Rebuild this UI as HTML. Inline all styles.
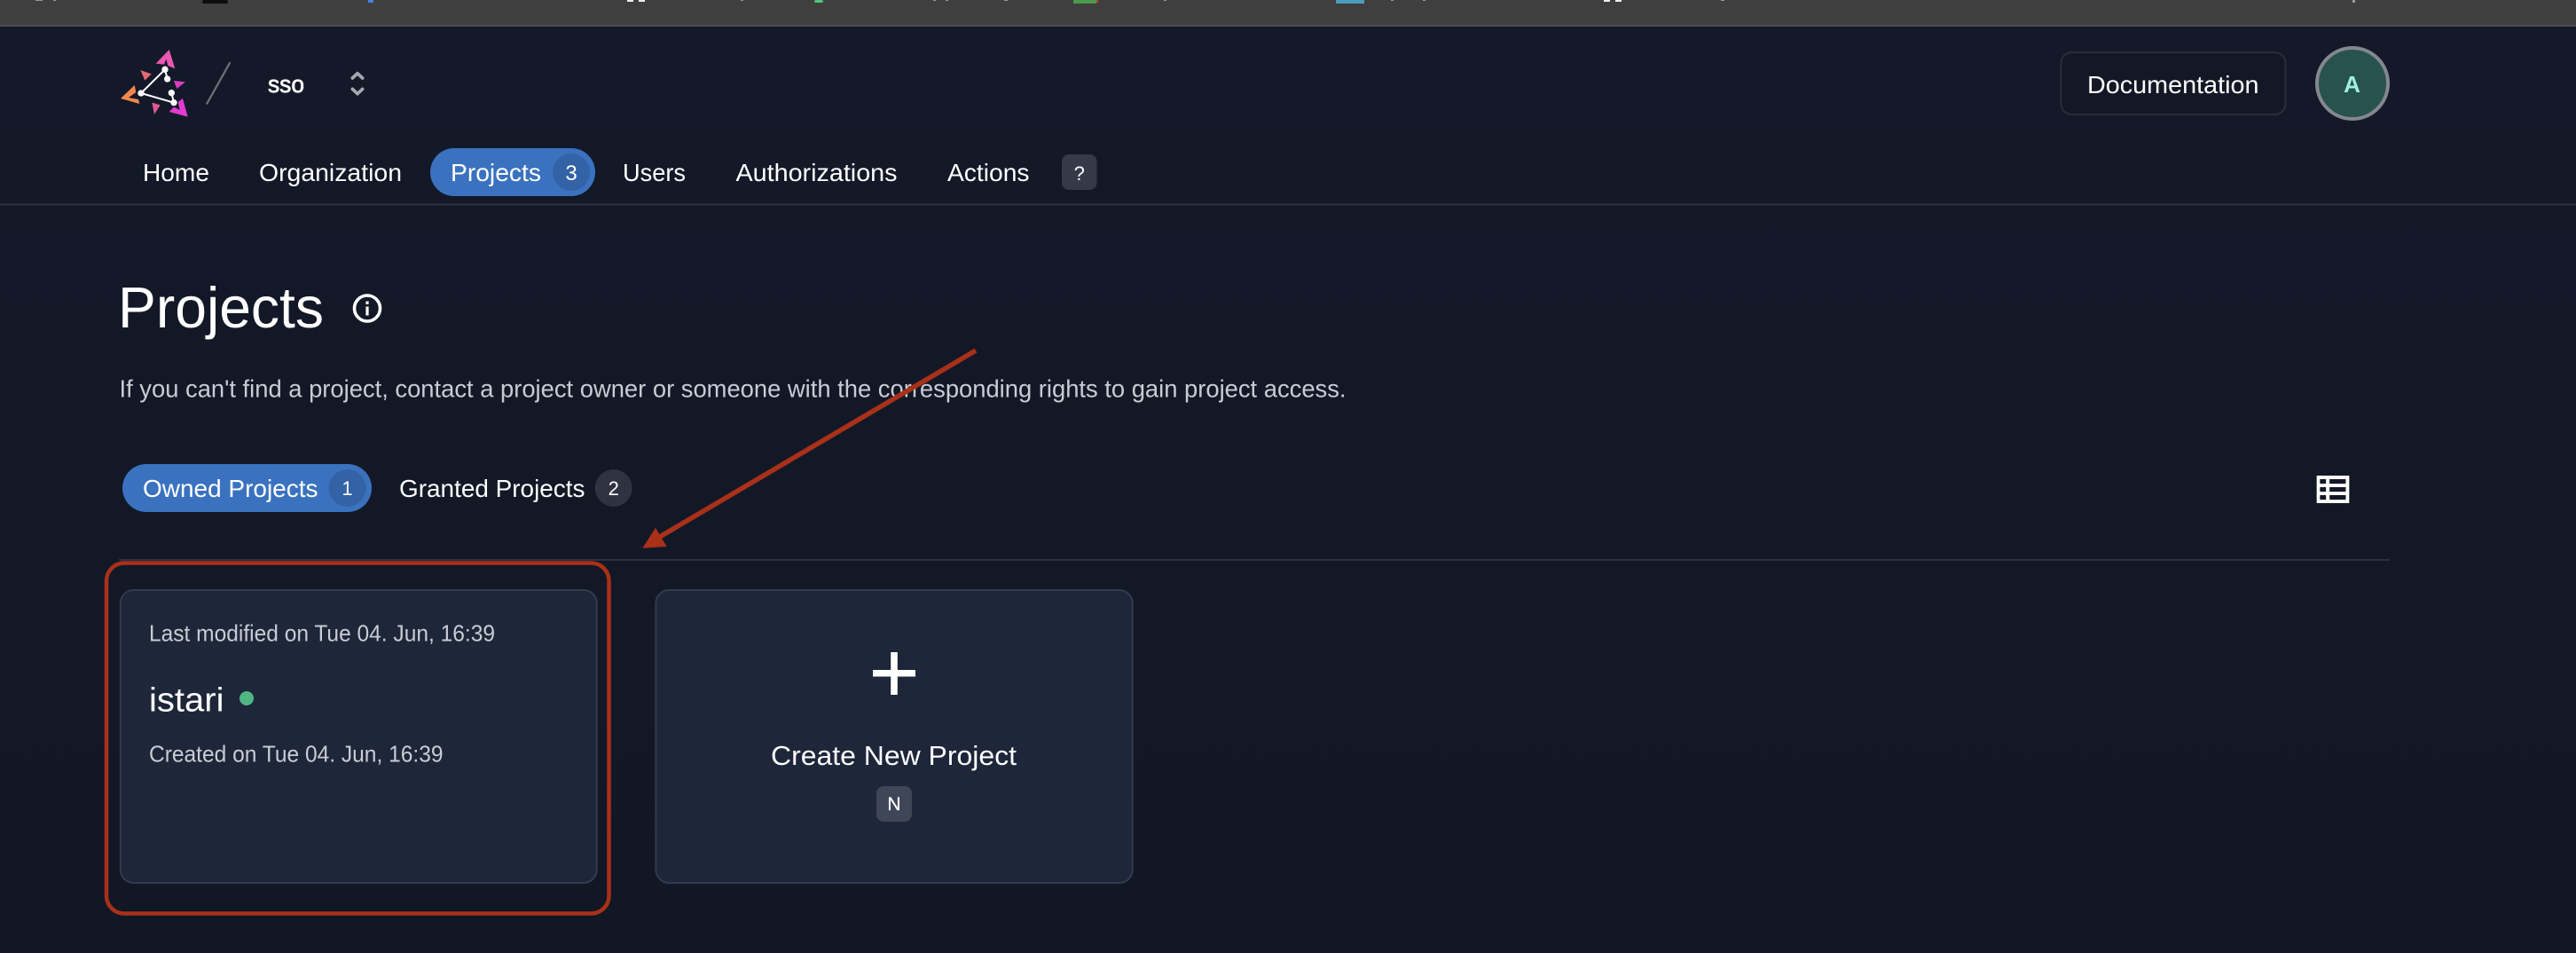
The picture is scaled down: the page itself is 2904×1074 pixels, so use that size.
<!DOCTYPE html>
<html lang="en">
<head>
<meta charset="utf-8">
<title>Projects</title>
<style>
html,body{margin:0;padding:0;width:2904px;height:1074px;overflow:hidden;background:#121826}
svg{position:absolute;left:0;top:0;display:block;font-family:"Liberation Sans",sans-serif;font-size:28px}
text{fill:#fff}
.d{fill:#c9ccd3}
</style>
</head>
<body>
<svg width="2904" height="1074" viewBox="0 0 2904 1074" xmlns="http://www.w3.org/2000/svg">
  <defs>
    <linearGradient id="bg" x1="0" y1="0" x2="0" y2="1"><stop offset="0" stop-color="#131928"/><stop offset="1" stop-color="#111724"/></linearGradient>
  </defs>
  <rect x="0" y="0" width="2904" height="1074" fill="url(#bg)"/>

  <!-- browser strip -->
  <rect x="0" y="0" width="2904" height="30" fill="#3f3f3f"/>
  <rect x="0" y="28" width="2904" height="2" fill="#4a4c4c"/>
  <rect x="228" y="0" width="29" height="4" rx="2" fill="#0d0d0d"/>
  <rect x="415" y="0" width="6" height="3" fill="#4a7fe8"/>
  <rect x="707" y="0" width="7" height="2" fill="#eee"/>
  <rect x="720" y="0" width="7" height="2" fill="#eee"/>
  <rect x="918" y="0" width="10" height="3" rx="2" fill="#4fc47c"/>
  <rect x="1210" y="0" width="26" height="4" fill="#4a9a4a"/>
  <rect x="1236" y="0" width="2" height="3" fill="#c0392b"/>
  <rect x="1506" y="0" width="32" height="4" fill="#4a9ebb"/>
  <rect x="1808" y="0" width="7" height="2" fill="#eee"/>
  <rect x="1821" y="0" width="7" height="2" fill="#eee"/>
  <g fill="#9a9a9a">
    <rect x="40" y="0" width="8" height="1"/><rect x="60" y="0" width="3" height="1"/>
    <rect x="835" y="0" width="3" height="1"/><rect x="1052" y="0" width="3" height="1"/>
    <rect x="1066" y="0" width="3" height="1"/><rect x="1132" y="0" width="4" height="1"/>
    <rect x="1312" y="0" width="3" height="1"/><rect x="1568" y="0" width="3" height="1"/>
    <rect x="1604" y="0" width="3" height="1"/><rect x="1940" y="0" width="4" height="1"/>
    <rect x="2652" y="0" width="3" height="3"/>
  </g>

  <!-- logo -->
  <g transform="translate(100 40) scale(.33333)">
    <path d="M272 48L292 112L268 102L262 80L255 98L227 95Z" fill="#ea58b0"/>
    <path d="M155 168L108 213L172 231L168 216L135 210L160 192Z" fill="#f4874b"/>
    <path d="M335 275L272 258L288 242L308 252L302 225L318 213Z" fill="#e33bcf"/>
    <path d="M175 117L212 130L190 152Z" fill="#e46a72"/>
    <path d="M288 153L327 157L298 180Z" fill="#d93cc0"/>
    <path d="M214 227L242 235L222 267Z" fill="#dc5a95"/>
    <g stroke="#fff" stroke-width="6" fill="none"><path d="M258 115L177 195L288 227M258 115L266 147M280 194L288 227"/></g>
    <g fill="#fff"><circle cx="258" cy="115" r="11"/><circle cx="266" cy="147" r="11"/><circle cx="177" cy="195" r="11"/><circle cx="280" cy="194" r="11"/><circle cx="288" cy="227" r="11"/></g>
    <path d="M400 230L477 93" stroke="#6c6e76" stroke-width="7" stroke-linecap="round"/>
    <path d="M892 144L909 128L926 144M892 181L909 197L926 181" stroke="#a6a8ae" stroke-width="11" fill="none" stroke-linecap="round" stroke-linejoin="round"/>
  </g>
  <text x="302" y="104" font-size="27" textLength="41" lengthAdjust="spacingAndGlyphs" stroke="#fff" stroke-width=".7">sso</text>

  <!-- nav -->
  <text x="161" y="204" textLength="75" lengthAdjust="spacingAndGlyphs">Home</text>
  <text x="292" y="204" textLength="161" lengthAdjust="spacingAndGlyphs">Organization</text>
  <rect x="485" y="167" width="186" height="54" rx="27" fill="#3a72bf"/>
  <circle cx="644" cy="194" r="21" fill="#3362a6"/>
  <text x="508" y="204" textLength="102" lengthAdjust="spacingAndGlyphs">Projects</text>
  <text x="644" y="203" font-size="24" text-anchor="middle">3</text>
  <text x="702" y="204" textLength="71" lengthAdjust="spacingAndGlyphs">Users</text>
  <text x="829.5" y="204" textLength="182" lengthAdjust="spacingAndGlyphs">Authorizations</text>
  <text x="1068" y="204" textLength="92.5" lengthAdjust="spacingAndGlyphs">Actions</text>
  <rect x="1197" y="174" width="39.5" height="40" rx="8" fill="#363a48"/>
  <text x="1216.7" y="203" font-size="22" text-anchor="middle">?</text>
  <rect x="0" y="229.5" width="2904" height="2" fill="#2d2f3f"/>

  <!-- doc button + avatar -->
  <rect x="2323.5" y="59" width="253" height="70" rx="12" fill="#141826" stroke="#2a2d3b" stroke-width="2"/>
  <text x="2353" y="105" textLength="193.5" lengthAdjust="spacingAndGlyphs">Documentation</text>
  <circle cx="2652" cy="94" r="40" fill="#27524e" stroke="#85878f" stroke-width="4"/>
  <text x="2651.5" y="104" font-size="26" font-weight="700" style="fill:#a0f0de" text-anchor="middle">A</text>

  <!-- heading -->
  <text x="133" y="369" font-size="65" textLength="232" lengthAdjust="spacingAndGlyphs">Projects</text>
  <circle cx="414" cy="347.5" r="14.5" fill="none" stroke="#fff" stroke-width="3.6"/>
  <rect x="412.4" y="345.5" width="3.2" height="10" fill="#fff"/>
  <rect x="412.4" y="339.5" width="3.2" height="3.4" fill="#fff"/>
  <text class="d" x="134.5" y="447.5" textLength="1383" lengthAdjust="spacingAndGlyphs">If you can't find a project, contact a project owner or someone with the corresponding rights to gain project access.</text>

  <!-- tabs -->
  <rect x="138" y="523" width="281" height="54" rx="27" fill="#3a72bf"/>
  <circle cx="391.5" cy="550" r="21" fill="#3362a6"/>
  <text x="161" y="560" textLength="197.5" lengthAdjust="spacingAndGlyphs">Owned Projects</text>
  <text x="391.5" y="558" font-size="22" text-anchor="middle">1</text>
  <text x="450" y="560" textLength="209.5" lengthAdjust="spacingAndGlyphs">Granted Projects</text>
  <circle cx="691.7" cy="550" r="21" fill="#2f3241"/>
  <text x="691.7" y="558" font-size="22" text-anchor="middle">2</text>

  <!-- table icon -->
  <g transform="translate(2560 500) scale(.33333)">
    <rect x="155" y="108" width="110" height="93" fill="#fff"/>
    <g fill="#121826">
      <rect x="166" y="120" width="20.5" height="15.5"/><rect x="198.5" y="120" width="55" height="15.5"/>
      <rect x="166" y="147" width="20.5" height="15.5"/><rect x="198.5" y="147" width="55" height="15.5"/>
      <rect x="166" y="174" width="20.5" height="15.5"/><rect x="198.5" y="174" width="55" height="15.5"/>
    </g>
  </g>
  <rect x="134" y="630" width="2560" height="2" fill="#2d2f3f"/>

  <!-- cards -->
  <rect x="135.8" y="665" width="537" height="330" rx="15" fill="#1e263a" stroke="#343a4c" stroke-width="2"/>
  <rect x="739.4" y="665" width="537.3" height="330" rx="15" fill="#1e263a" stroke="#343a4c" stroke-width="2"/>
  <text class="d" x="168" y="722.7" font-size="26" textLength="390" lengthAdjust="spacingAndGlyphs">Last modified on Tue 04. Jun, 16:39</text>
  <text x="168" y="801.7" font-size="38" textLength="84.5" lengthAdjust="spacingAndGlyphs">istari</text>
  <circle cx="278" cy="787" r="8" fill="#4fb783"/>
  <text class="d" x="168" y="858.7" font-size="26" textLength="331.5" lengthAdjust="spacingAndGlyphs">Created on Tue 04. Jun, 16:39</text>

  <rect x="984" y="755" width="48" height="7.5" fill="#fff"/>
  <rect x="1004.2" y="735" width="7.6" height="48" fill="#fff"/>
  <text x="869" y="862" font-size="31" textLength="277" lengthAdjust="spacingAndGlyphs">Create New Project</text>
  <rect x="988" y="886" width="40" height="40" rx="8" fill="#3f4658"/>
  <text x="1008" y="913" font-size="21" text-anchor="middle" stroke="#fff" stroke-width=".3">N</text>

  <!-- annotations -->
  <rect x="120" y="634.5" width="566.5" height="395" rx="20" fill="none" stroke="#a93019" stroke-width="4.5"/>
  <path d="M1100 395L742 606" stroke="#a93019" stroke-width="5.5" fill="none"/>
  <path d="M724.3 617.7L739 594.7L751.7 616Z" fill="#a93019"/>
</svg>
</body>
</html>
